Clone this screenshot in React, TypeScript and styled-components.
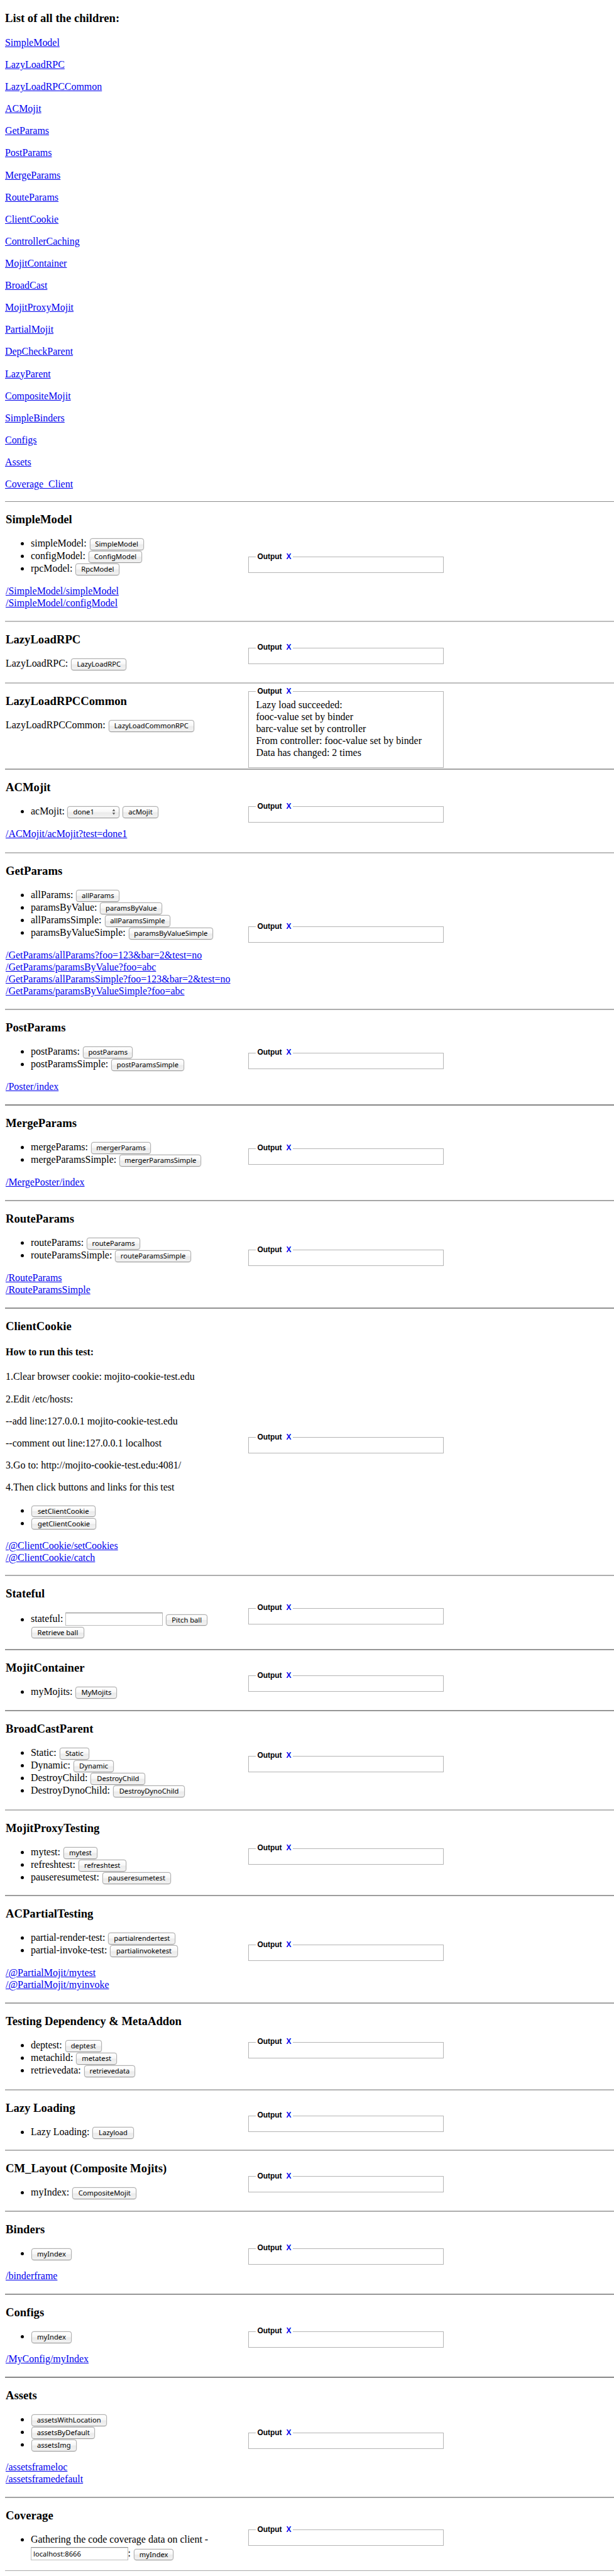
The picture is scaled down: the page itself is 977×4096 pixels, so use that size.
import React from 'react';
import styled, { createGlobalStyle } from 'styled-components';

const GlobalStyle = createGlobalStyle`
  body {
    margin: 0;
    background: #fff;
    color: #000;
    font-family: "Liberation Serif", "Times New Roman", serif;
    font-size: 15.96px;
    overflow-x: hidden;
  }
`;

const Page = styled.main`
  padding-left: 8px;
  height: 4096px;
  box-sizing: border-box;
  overflow: hidden;
`;

const Index = styled.nav`
  height: 798px;
  box-sizing: border-box;
  padding-top: 18.3px;
  border-bottom: 1px solid #8e8e8e;
`;

const Heading = styled.h3`
  margin: 0;
  font-size: 18.68px;
  line-height: 22px;
  font-weight: bold;
`;

const IndexList = styled.div`
  display: flex;
  flex-direction: column;
  align-items: flex-start;
  gap: 16.55px;
  margin-top: 18.6px;
`;

const Link = styled.a`
  color: #0000ee;
  text-decoration: underline;
  line-height: 18.57px;
`;

const Row = styled.section<{ $height: number; $tone: string; $rule?: number }>`
  display: grid;
  grid-template-columns: 386px 1fr;
  box-sizing: border-box;
  height: ${(p) => p.$height}px;
  border-bottom: ${(p) => p.$rule ?? 2}px solid ${(p) => p.$tone};
`;

const Controls = styled.div`
  padding: 16.8px 0 0 1px;
  min-width: 0;
`;

const List = styled.ul<{ $flush?: boolean }>`
  margin: 17.4px 0 0;
  padding: 0 0 0 ${(p) => (p.$flush ? 0 : 40)}px;
  list-style: disc;
`;

const Item = styled.li`
  line-height: 20.05px;
  white-space: nowrap;
`;

const Links = styled.div`
  display: flex;
  flex-direction: column;
  align-items: flex-start;
  gap: 0.5px;
  margin-top: 16.8px;
`;

const Button = styled.button<{ $w: number }>`
  display: inline-flex;
  align-items: center;
  justify-content: center;
  box-sizing: border-box;
  width: ${(p) => p.$w}px;
  height: 18.3px;
  margin: -2px 1px;
  padding: 0 0 1.5px;
  border: 1px solid #b2b2b2;
  border-bottom-color: #9c9c9c;
  border-radius: 4px;
  background: linear-gradient(#fff 0%, #f7f7f7 48%, #ebebeb 52%, #f2f2f2 100%);
  box-shadow: 0 0 0.5px 0.4px rgba(0, 0, 0, 0.14);
  color: #000;
  font-family: "Noto Sans", "Open Sans", sans-serif;
  font-size: 11.2px;
  line-height: 15px;
  white-space: nowrap;
`;

const Picker = styled(Button)`
  justify-content: space-between;
  margin: -2px 0 -2px -0.5px;
  padding: 0 5px 1.5px 9px;
`;

const Field = styled.input`
  box-sizing: border-box;
  width: 154.6px;
  height: 21.2px;
  margin: 1.5px 0 -2.3px;
  padding: 0 3px;
  border: 1px solid #bcbcbc;
  border-top: 1px solid #8f8f8f;
  border-radius: 0;
  box-shadow: inset 0 1px 0 #e6e6e6;
  outline: none;
  vertical-align: text-bottom;
  background: #fff;
  color: #000;
  font-family: "Noto Sans", "Open Sans", sans-serif;
  font-size: 11.2px;
`;

const Guide = styled.div`
  display: flex;
  flex-direction: column;
  gap: 16.5px;
  line-height: 18.57px;
`;

const GuideTitle = styled.h4`
  margin: 20.8px 0 4.8px;
  font-size: 15.96px;
  font-weight: bold;
`;

const Para = styled.p`
  margin: 0;
`;

const OutputCell = styled.div`
  display: flex;
  flex-direction: column;
  justify-content: center;
  padding: 5.1px 0 0 1.4px;
`;

const Output = styled.fieldset`
  box-sizing: border-box;
  width: 310.6px;
  min-height: 32.4px;
  margin: 0;
  padding: 4.4px 11px 0;
  border: 1px solid #b4b4b4;
  line-height: 19.1px;
  flex: none;
`;

const OutputText = styled.div`
  height: 109px;
`;

const Legend = styled.legend`
  padding: 0 2px;
  font-family: "Liberation Sans", Arial, sans-serif;
  font-size: 11.97px;
  font-weight: bold;
  line-height: 13.6px;
`;

const Clear = styled.span`
  margin-left: 3.6px;
  color: #0000ee;
`;

const Arrows = () => (
  <svg width="6" height="10" viewBox="0 0 6 10" fill="#555">
    <path d="M3 0.4 L5.3 3.8 H0.7 Z M3 9.6 L5.3 6.2 H0.7 Z" />
  </svg>
);

type Entry = [label: string, button: string, width: number];

interface Section {
  title: string;
  height: number;
  tone: string;
  rule?: number;
  flush?: boolean;
  items?: Entry[];
  links?: string[];
  guide?: string[];
  output?: string[];
  body?: React.ReactNode;
}

const index = [
  'SimpleModel', 'LazyLoadRPC', 'LazyLoadRPCCommon', 'ACMojit', 'GetParams', 'PostParams', 'MergeParams',
  'RouteParams', 'ClientCookie', 'ControllerCaching', 'MojitContainer', 'BroadCast', 'MojitProxyMojit',
  'PartialMojit', 'DepCheckParent', 'LazyParent', 'CompositeMojit', 'SimpleBinders', 'Configs', 'Assets',
  'Coverage_Client',
];

const sections: Section[] = [
  {
    title: 'SimpleModel', height: 191, tone: '#bdbdbd',
    items: [['simpleModel:', 'SimpleModel', 86], ['configModel:', 'ConfigModel', 85.2], ['rpcModel:', 'RpcModel', 69.8]],
    links: ['/SimpleModel/simpleModel', '/SimpleModel/configModel'],
  },
  { title: 'LazyLoadRPC', height: 98, tone: '#bdbdbd', flush: true, items: [['LazyLoadRPC:', 'LazyLoadRPC', 88]] },
  {
    title: 'LazyLoadRPCCommon', height: 137, tone: '#a3a3a3', flush: true,
    items: [['LazyLoadRPCCommon:', 'LazyLoadCommonRPC', 136.4]],
    output: [
      'Lazy load succeeded:', 'fooc-value set by binder', 'barc-value set by controller',
      'From controller: fooc-value set by binder', 'Data has changed: 2 times',
    ],
  },
  {
    title: 'ACMojit', height: 133, tone: '#bbbbbb', links: ['/ACMojit/acMojit?test=done1'],
    body: (
      <Item>
        acMojit: <Picker $w={83.8}>done1<Arrows /></Picker> <Button $w={56.3}>acMojit</Button>
      </Item>
    ),
  },
  {
    title: 'GetParams', height: 249, tone: '#adadad',
    items: [
      ['allParams:', 'allParams', 68.9], ['paramsByValue:', 'paramsByValue', 98.7],
      ['allParamsSimple:', 'allParamsSimple', 104.7], ['paramsByValueSimple:', 'paramsByValueSimple', 134.4],
    ],
    links: [
      '/GetParams/allParams?foo=123&bar=2&test=no', '/GetParams/paramsByValue?foo=abc',
      '/GetParams/allParamsSimple?foo=123&bar=2&test=no', '/GetParams/paramsByValueSimple?foo=abc',
    ],
  },
  {
    title: 'PostParams', height: 152, tone: '#858585', links: ['/Poster/index'],
    items: [['postParams:', 'postParams', 79.5], ['postParamsSimple:', 'postParamsSimple', 115.4]],
  },
  {
    title: 'MergeParams', height: 152, tone: '#a6a6a6', links: ['/MergePoster/index'],
    items: [['mergeParams:', 'mergerParams', 95.3], ['mergeParamsSimple:', 'mergerParamsSimple', 130.3]],
  },
  {
    title: 'RouteParams', height: 171, tone: '#929292', links: ['/RouteParams', '/RouteParamsSimple'],
    items: [['routeParams:', 'routeParams', 84.7], ['routeParamsSimple:', 'routeParamsSimple', 120.5]],
  },
  {
    title: 'ClientCookie', height: 425, tone: '#adadad',
    guide: [
      '1.Clear browser cookie: mojito-cookie-test.edu', '2.Edit /etc/hosts:',
      '--add line:127.0.0.1 mojito-cookie-test.edu', '--comment out line:127.0.0.1 localhost',
      '3.Go to: http://mojito-cookie-test.edu:4081/', '4.Then click buttons and links for this test',
    ],
    items: [['', 'setClientCookie', 101.5], ['', 'getClientCookie', 103.2]],
    links: ['/@ClientCookie/setCookies', '/@ClientCookie/catch'],
  },
  {
    title: 'Stateful', height: 118, tone: '#959595',
    body: (
      <Item>
        stateful: <Field aria-label="stateful" /> <Button $w={66.5}>Pitch ball</Button>
        <br />
        <Button $w={83.8}>Retrieve ball</Button>
      </Item>
    ),
  },
  { title: 'MojitContainer', height: 97, tone: '#959595', items: [['myMojits:', 'MyMojits', 66]] },
  {
    title: 'BroadCastParent', height: 158, tone: '#b8b8b8',
    items: [
      ['Static:', 'Static', 47], ['Dynamic:', 'Dynamic', 64.2], ['DestroyChild:', 'DestroyChild', 87],
      ['DestroyDynoChild:', 'DestroyDynoChild', 114.4],
    ],
  },
  {
    title: 'MojitProxyTesting', height: 136, tone: '#9d9d9d',
    items: [
      ['mytest:', 'mytest', 54], ['refreshtest:', 'refreshtest', 75.8], ['pauseresumetest:', 'pauseresumetest', 108.8],
    ],
  },
  {
    title: 'ACPartialTesting', height: 171, tone: '#a3a3a3',
    items: [['partial-render-test:', 'partialrendertest', 107], ['partial-invoke-test:', 'partialinvoketest', 107.4]],
    links: ['/@PartialMojit/mytest', '/@PartialMojit/myinvoke'],
  },
  {
    title: 'Testing Dependency & MetaAddon', height: 138, tone: '#b3b3b3',
    items: [['deptest:', 'deptest', 58.1], ['metachild:', 'metatest', 64.6], ['retrievedata:', 'retrievedata', 81.4]],
  },
  { title: 'Lazy Loading', height: 96, tone: '#b3b3b3', items: [['Lazy Loading:', 'Lazyload', 65.1]] },
  {
    title: 'CM_Layout (Composite Mojits)', height: 97, tone: '#adadad',
    items: [['myIndex:', 'CompositeMojit', 102.3]],
  },
  { title: 'Binders', height: 132, tone: '#969696', items: [['', 'myIndex', 64]], links: ['/binderframe'] },
  { title: 'Configs', height: 132, tone: '#868686', items: [['', 'myIndex', 64]], links: ['/MyConfig/myIndex'] },
  {
    title: 'Assets', height: 191, tone: '#a3a3a3',
    items: [['', 'assetsWithLocation', 119.5], ['', 'assetsByDefault', 101.4], ['', 'assetsImg', 71.6]],
    links: ['/assetsframeloc', '/assetsframedefault'],
  },
  {
    title: 'Coverage', height: 116, tone: '#aaaaaa', rule: 1,
    body: (
      <Item>
        Gathering the code coverage data on client -
        <br />
        <Field aria-label="host" defaultValue="localhost:8666" />: <Button $w={63.3}>myIndex</Button>
      </Item>
    ),
  },
];

const SectionRow = ({ section: s }: { section: Section }) => (
  <Row $height={s.height} $tone={s.tone} $rule={s.rule}>
    <Controls>
      <Heading>{s.title}</Heading>
      {s.guide && (
        <Guide>
          <GuideTitle>How to run this test:</GuideTitle>
          {s.guide.map((line) => <Para key={line}>{line}</Para>)}
        </Guide>
      )}
      <List $flush={s.flush}>
        {s.body}
        {s.items?.map(([label, button, width]) => (
          <Item key={button}>
            {label && `${label} `}
            <Button $w={width}>{button}</Button>
          </Item>
        ))}
      </List>
      {s.links && <Links>{s.links.map((l) => <Link key={l}>{l}</Link>)}</Links>}
    </Controls>
    <OutputCell>
      <Output>
        <Legend>Output <Clear>X</Clear></Legend>
        {s.output && <OutputText>{s.output.map((l) => <div key={l}>{l}</div>)}</OutputText>}
      </Output>
    </OutputCell>
  </Row>
);

export default function App() {
  return (
    <Page>
      <GlobalStyle />
      <Index>
        <Heading>List of all the children:</Heading>
        <IndexList>{index.map((name) => <Link key={name}>{name}</Link>)}</IndexList>
      </Index>
      {sections.map((s) => <SectionRow key={s.title} section={s} />)}
    </Page>
  );
}
